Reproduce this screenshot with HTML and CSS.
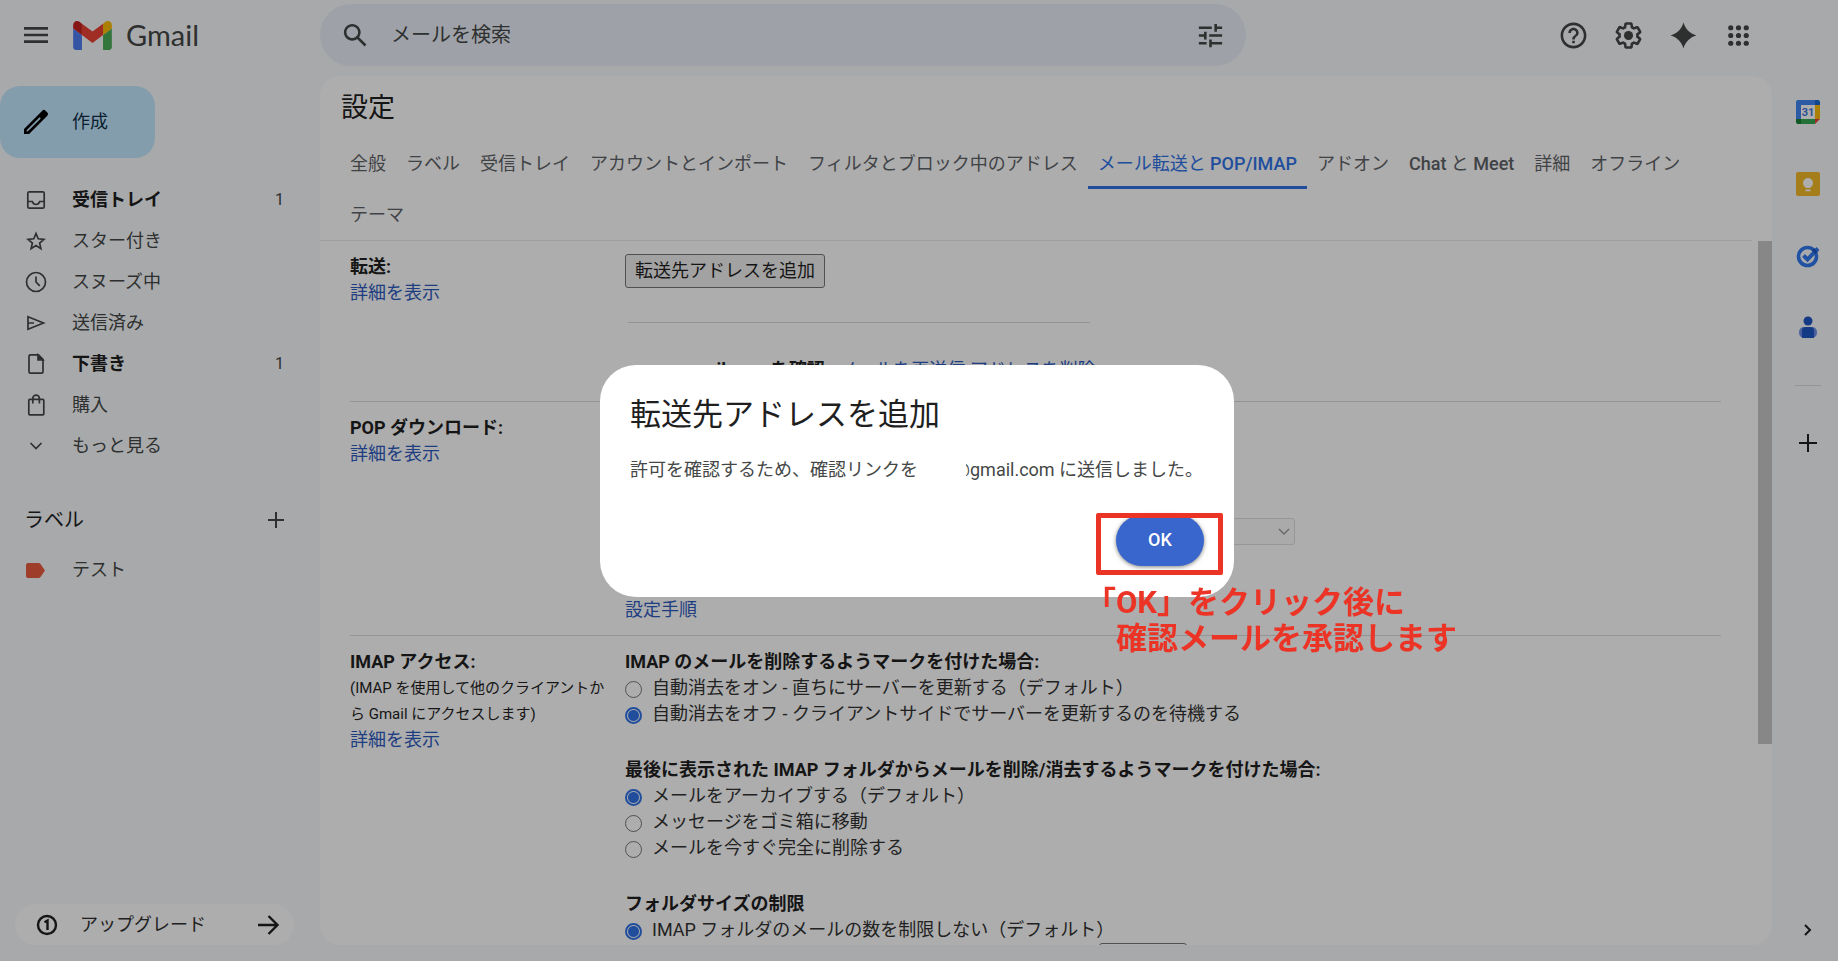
FILE: index.html
```
<!DOCTYPE html>
<html lang="ja">
<head>
    <meta charset="utf-8">
    <title>Gmail</title>
    <meta name="viewport" content="width=device-width, initial-scale=1">
    <link rel="stylesheet" href="styles.css">
</head>
<body>
    <div class="app">
        <header class="header">
            <div class="brand">
                <button class="icon-btn" aria-label="メインメニュー">
                    <svg class="icon-lg" viewBox="0 0 24 24"><path d="M3 18h18v-2H3v2zm0-5h18v-2H3v2zm0-7v2h18V6H3z"/></svg>
                </button>
                <a class="logo" href="#">
                    <svg class="logo-mark" viewBox="52 42 88 66">
                        <path fill="#4f7df0" d="M58 108h14V74L52 59v43c0 3.32 2.69 6 6 6"/>
                        <path fill="#4cae58" d="M120 108h14c3.32 0 6-2.69 6-6V59l-20 15"/>
                        <path fill="#fbbc04" d="M120 48v26l20-15v-8c0-7.42-8.47-11.65-14.4-7.2"/>
                        <path fill="#ea4335" d="M72 74V48l24 18 24-18v26L96 92"/>
                        <path fill="#c5221f" d="M52 51v8l20 15V48l-5.6-4.2c-5.94-4.45-14.4-.22-14.4 7.2"/>
                    </svg>
                    <span>Gmail</span>
                </a>
            </div>
            <form class="search">
                <button class="icon-btn" type="button" aria-label="検索">
                    <svg class="icon" viewBox="0 0 24 24"><path d="M20.49 19l-5.73-5.73C15.53 12.2 16 10.91 16 9.5 16 5.91 13.09 3 9.5 3S3 5.91 3 9.5 5.91 16 9.5 16c1.41 0 2.7-.47 3.77-1.24L19 20.49 20.49 19zM5 9.5C5 7.01 7.01 5 9.5 5S14 7.01 14 9.5 11.99 14 9.5 14 5 11.99 5 9.5z"/></svg>
                </button>
                <input class="search-input" type="text" placeholder="メールを検索" aria-label="メールを検索">
                <button class="icon-btn" type="button" aria-label="検索オプション">
                    <svg class="icon" viewBox="0 0 24 24"><path d="M3 17v2h6v-2H3zM3 5v2h10V5H3zm10 16v-2h8v-2h-8v-2h-2v6h2zM7 9v2H3v2h4v2h2V9H7zm14 4v-2H11v2h10zm-6-4h2V7h4V5h-4V3h-2v6z"/></svg>
                </button>
            </form>
            <div class="header-tools">
                <button class="icon-btn" aria-label="サポート">
                    <svg class="icon" viewBox="0 0 24 24"><path d="M11 18h2v-2h-2v2zm1-16C6.48 2 2 6.48 2 12s4.48 10 10 10 10-4.48 10-10S17.52 2 12 2zm0 18c-4.41 0-8-3.59-8-8s3.59-8 8-8 8 3.59 8 8-3.59 8-8 8zm0-14c-2.21 0-4 1.79-4 4h2c0-1.1.9-2 2-2s2 .9 2 2c0 2-3 1.75-3 5h2c0-2.25 3-2.5 3-5 0-2.21-1.79-4-4-4z"/></svg>
                </button>
                <button class="icon-btn" aria-label="設定">
                    <svg class="icon" viewBox="0 0 24 24"><path d="M13.85 22.25h-3.7c-.74 0-1.36-.54-1.45-1.27l-.27-1.89c-.27-.14-.53-.29-.79-.46l-1.8.72c-.7.26-1.47-.03-1.81-.65L2.2 15.53c-.35-.66-.2-1.44.36-1.88l1.53-1.19c-.01-.15-.02-.3-.02-.46 0-.15.01-.31.02-.46l-1.52-1.19c-.59-.45-.74-1.26-.37-1.88l1.85-3.19c.34-.62 1.11-.9 1.79-.63l1.81.73c.26-.17.52-.32.78-.46l.27-1.91c.09-.7.71-1.25 1.44-1.25h3.7c.74 0 1.36.54 1.45 1.27l.27 1.89c.27.14.53.29.79.46l1.8-.72c.71-.26 1.48.03 1.82.65l1.84 3.18c.36.66.2 1.44-.36 1.88l-1.52 1.19c.01.15.02.3.02.46s-.01.31-.02.46l1.52 1.19c.56.45.72 1.23.37 1.86l-1.86 3.22c-.34.62-1.11.9-1.8.63l-1.8-.72c-.26.17-.52.32-.78.46l-.27 1.91c-.1.68-.72 1.22-1.46 1.22zm-3.23-2h2.76l.37-2.55.53-.22c.44-.18.88-.44 1.34-.78l.45-.34 2.38.96 1.38-2.4-2.03-1.58.07-.56c.03-.26.06-.51.06-.78s-.03-.53-.06-.78l-.07-.56 2.03-1.58-1.39-2.4-2.39.96-.45-.35c-.42-.32-.87-.58-1.33-.77l-.52-.22-.37-2.55h-2.76l-.37 2.55-.53.21c-.44.19-.88.44-1.34.79l-.45.33-2.38-.95-1.39 2.39 2.03 1.58-.07.56a7 7 0 0 0-.06.79c0 .26.02.53.06.78l.07.56-2.03 1.58 1.38 2.4 2.39-.96.45.35c.43.33.86.58 1.33.77l.53.22.38 2.55z"/><circle cx="12" cy="12" r="3.5"/></svg>
                </button>
                <button class="icon-btn" aria-label="Gemini">
                    <svg class="icon" viewBox="0 0 24 24"><path d="M12 2c1.4 5 5 8.6 10 10-5 1.4-8.6 5-10 10-1.4-5-5-8.6-10-10 5-1.4 8.6-5 10-10z"/></svg>
                </button>
                <button class="icon-btn" aria-label="Google アプリ">
                    <svg class="icon" viewBox="0 0 24 24"><circle cx="6" cy="6" r="2"/><circle cx="12" cy="6" r="2"/><circle cx="18" cy="6" r="2"/><circle cx="6" cy="12" r="2"/><circle cx="12" cy="12" r="2"/><circle cx="18" cy="12" r="2"/><circle cx="6" cy="18" r="2"/><circle cx="12" cy="18" r="2"/><circle cx="18" cy="18" r="2"/></svg>
                </button>
            </div>
        </header>

        <div class="main">
            <aside class="sidebar">
                <button class="compose">
                    <svg class="icon-lg" viewBox="0 0 24 24"><path fill-rule="evenodd" d="M3 17.2V21h3.8L20.5 7.3a1.7 1.7 0 0 0 0-2.4l-1.4-1.4a1.7 1.7 0 0 0-2.4 0zM5.9 19H5v-.9l9.7-9.7.9.9z"/></svg>
                    <span>作成</span>
                </button>
                <nav class="folders">
                    <a class="folder unread" href="#">
                        <svg class="line-icon" viewBox="0 0 24 24"><rect x="3.8" y="3.8" width="16.4" height="16.4" rx="1.5"/><path d="M4 13.5h4.3c.6 1.9 1.9 3 3.7 3s3.1-1.1 3.700-3H20"/></svg>
                        <span class="folder-name">受信トレイ</span>
                        <span class="count">1</span>
                    </a>
                    <a class="folder" href="#">
                        <svg class="line-icon" viewBox="0 0 24 24"><path d="M12 4.500l2.200 5.300 5.700.5-4.300 3.700 1.300 5.600-4.900-3-4.900 3 1.300-5.600-4.300-3.700 5.700-.5z"/></svg>
                        <span class="folder-name">スター付き</span>
                    </a>
                    <a class="folder" href="#">
                        <svg class="line-icon" viewBox="0 0 24 24"><circle cx="12" cy="12" r="9.5"/><path d="M12 6.5V12l3.8 3.8"/></svg>
                        <span class="folder-name">スヌーズ中</span>
                    </a>
                    <a class="folder" href="#">
                        <svg class="line-icon" viewBox="0 0 24 24"><path d="M4 5.800L19.500 12 4 18.200zM4 12h6"/></svg>
                        <span class="folder-name">送信済み</span>
                    </a>
                    <a class="folder unread" href="#">
                        <svg class="line-icon" viewBox="0 0 24 24"><path d="M14.5 2.800H6.500a1.500 1.500 0 0 0-1.500 1.500v15.400a1.500 1.500 0 0 0 1.500 1.500h11a1.500 1.500 0 0 0 1.500-1.500V7.300z"/><path fill="#444746" d="M14 3v4.800h4.800z"/></svg>
                        <span class="folder-name">下書き</span>
                        <span class="count">1</span>
                    </a>
                    <a class="folder" href="#">
                        <svg class="line-icon" viewBox="0 0 24 24"><rect x="4.800" y="6.300" width="15" height="15.500" rx="1"/><path d="M8.800 10.500V5.500a3.300 3.300 0 0 1 6.600 0v5"/></svg>
                        <span class="folder-name">購入</span>
                    </a>
                    <a class="folder" href="#">
                        <svg class="line-icon" viewBox="0 0 24 24"><path d="M6.500 9l5.500 5.500L17.500 9"/></svg>
                        <span class="folder-name">もっと見る</span>
                    </a>
                </nav>
                <div class="labels-head">
                    <h2>ラベル</h2>
                    <button class="icon-btn" aria-label="新しいラベルを作成">
                        <svg class="plus-icon" viewBox="0 0 16 16"><path d="M8 0v16M0 8h16"/></svg>
                    </button>
                </div>
                <a class="folder" href="#">
                    <svg class="line-icon" viewBox="0 0 24 24"><path class="tag" d="M4 5h10.500c.8 0 1.500.3 2 1l4.500 6.500-4.500 6.500c-.5.700-1.200 1-2 1H4c-1 0-2-.8-2-2V7c0-1.200 1-2 2-2z"/></svg>
                    <span class="folder-name">テスト</span>
                </a>
                <button class="upgrade">
                    <svg class="badge-icon" viewBox="0 0 24 24"><circle cx="12" cy="12" r="9"/><path d="M9.500 9.300L12.500 7.500V17"/></svg>
                    <span class="upgrade-text">アップグレード</span>
                    <svg class="badge-icon" viewBox="0 0 24 24"><path d="M2 12h19M12.500 3l9 9-9 9"/></svg>
                </button>
            </aside>

            <main class="panel">
                <h1 class="panel-title">設定</h1>
                <nav class="tabs">
                    <a class="tab" href="#">全般</a>
                    <a class="tab" href="#">ラベル</a>
                    <a class="tab" href="#">受信トレイ</a>
                    <a class="tab" href="#">アカウントとインポート</a>
                    <a class="tab" href="#">フィルタとブロック中のアドレス</a>
                    <a class="tab active" href="#">メール転送と <b>POP/IMAP</b></a>
                    <a class="tab" href="#">アドオン</a>
                    <a class="tab" href="#"><b>Chat</b> と <b>Meet</b></a>
                    <a class="tab" href="#">詳細</a>
                    <a class="tab" href="#">オフライン</a>
                    <a class="tab" href="#">テーマ</a>
                </nav>
                <div class="panel-body">
                    <div class="settings">
                        <section class="row row-forward">
                            <div class="row-label">
                                <h3>転送:</h3>
                                <a href="#">詳細を表示</a>
                            </div>
                            <div class="row-content">
                                <button class="add-address">転送先アドレスを追加</button>
                                <hr>
                                <p class="pending"><b>gmail.com を確認</b> <a href="#">メールを再送信</a> <a href="#">アドレスを削除</a></p>
                            </div>
                        </section>
                        <section class="row row-pop">
                            <div class="row-label">
                                <h3>POP ダウンロード:</h3>
                                <a href="#">詳細を表示</a>
                            </div>
                            <div class="row-content">
                                <div class="select-wrap">
                                    <select class="pop-select" aria-label="POP ダウンロード" disabled><option></option></select>
                                    <svg class="select-arrow" viewBox="0 0 12 8"><path d="M1 1l5 5 5-5"/></svg>
                                </div>
                                <a href="#">設定手順</a>
                            </div>
                        </section>
                        <section class="row row-imap">
                            <div class="row-label">
                                <h3>IMAP アクセス:</h3>
                                <p class="note">(IMAP を使用して他のクライアントから Gmail にアクセスします)</p>
                                <a href="#">詳細を表示</a>
                            </div>
                            <div class="row-content">
                                <div class="group">
                                    <h3>IMAP のメールを削除するようマークを付けた場合:</h3>
                                    <label class="option"><input type="radio" name="expunge">自動消去をオン - 直ちにサーバーを更新する（デフォルト）</label>
                                    <label class="option"><input type="radio" name="expunge" checked>自動消去をオフ - クライアントサイドでサーバーを更新するのを待機する</label>
                                </div>
                                <div class="group">
                                    <h3>最後に表示された IMAP フォルダからメールを削除/消去するようマークを付けた場合:</h3>
                                    <label class="option"><input type="radio" name="deleted" checked>メールをアーカイブする（デフォルト）</label>
                                    <label class="option"><input type="radio" name="deleted">メッセージをゴミ箱に移動</label>
                                    <label class="option"><input type="radio" name="deleted">メールを今すぐ完全に削除する</label>
                                </div>
                                <div class="group">
                                    <h3>フォルダサイズの制限</h3>
                                    <label class="option"><input type="radio" name="limit" checked>IMAP フォルダのメールの数を制限しない（デフォルト）</label>
                                    <select class="limit-select" aria-label="フォルダサイズの制限"><option></option></select>
                                </div>
                            </div>
                        </section>
                    </div>
                    <div class="scrollbar"><div class="thumb"></div></div>
                </div>
            </main>

            <aside class="rail">
                <a href="#" aria-label="カレンダー">
                    <svg class="rail-icon" viewBox="0 0 24 24"><path fill="#4285f4" d="M2 0h17v5H5v14H0V2a2 2 0 0 1 2-2z"/><path fill="#1967d2" d="M19 0h3a2 2 0 0 1 2 2v3h-5z"/><path fill="#fbbc04" d="M19 5h5v14h-5z"/><path fill="#34a853" d="M5 19h14v5H5z"/><path fill="#188038" d="M0 19h5v5H2a2 2 0 0 1-2-2z"/><path fill="#ea4335" d="M19 19h5l-5 5z"/><path fill="#fff" d="M5 5h14v14H5z"/><text x="12" y="16" text-anchor="middle">31</text></svg>
                </a>
                <a href="#" aria-label="Keep">
                    <svg class="rail-icon" viewBox="0 0 24 24"><rect width="24" height="24" rx="2" fill="#f5b928"/><circle cx="12" cy="11" r="5" fill="#fff"/><path fill="#fff" d="M9.500 14h5v2h-5zM9.500 17.500h5v1.800h-5z"/></svg>
                </a>
                <a href="#" aria-label="ToDo リスト">
                    <svg class="rail-icon" viewBox="0 0 24 24"><circle cx="11.500" cy="12.500" r="9" fill="none" stroke="#3078f0" stroke-width="3.600"/><path d="M7.500 11.500l4 4L22 4.500" fill="none" stroke="#3078f0" stroke-width="4"/><path d="M17 5.500l3.500 3.500" stroke="#1b55c0" stroke-width="3"/></svg>
                </a>
                <a href="#" aria-label="連絡先">
                    <svg class="rail-icon" viewBox="0 0 24 24"><circle cx="12" cy="5" r="4.500" fill="#1f56c4"/><rect x="3" y="11" width="18" height="11" rx="5" fill="#6f8fe8"/><path fill="#1f56c4" d="M10 11h4a4 4 0 0 1 4 4v7H6v-7a4 4 0 0 1 4-4z"/></svg>
                </a>
                <div class="rail-line"></div>
                <button class="icon-btn" aria-label="アドオンを取得">
                    <svg class="rail-plus" viewBox="0 0 18 18"><path d="M9 0v18M0 9h18"/></svg>
                </button>
                <button class="icon-btn rail-toggle" aria-label="サイドパネルを非表示">
                    <svg class="rail-plus" viewBox="0 0 18 18"><path d="M6 4l5 5-5 5"/></svg>
                </button>
            </aside>
        </div>
    </div>

    <div class="overlay">
        <div class="dialog" role="dialog" aria-labelledby="dialogTitle">
            <h2 id="dialogTitle">転送先アドレスを追加</h2>
            <p class="message">許可を確認するため、確認リンクを<span class="masked">@</span>gmail.com に送信しました。</p>
            <button class="ok">OK</button>
            <div class="highlight"></div>
            <p class="callout">「OK」をクリック後に<br><span>確認メールを承認します</span></p>
        </div>
    </div>
</body>
</html>
```
FILE: styles.css
```
* {
    margin: 0;
    padding: 0;
    box-sizing: border-box;
}

body {
    background: #fff;
    color: #1f1f1f;
    font-family: Roboto, "Noto Sans CJK JP", sans-serif;
    font-size: 18px;
    line-height: 26px;
    overflow: hidden;
}

button,
input,
select {
    font: inherit;
    color: inherit;
}

button {
    border: none;
    background: none;
    cursor: pointer;
}

a {
    color: #2f5cc0;
    text-decoration: none;
}

h3 {
    font-size: 18px;
    font-weight: 700;
}

svg {
    display: block;
    flex: none;
}

.app {
    height: calc(100vh - 3px);
    background: #f8fafd;
    display: flex;
    flex-direction: column;
}

.icon-btn {
    display: flex;
}

.icon {
    width: 31px;
    height: 31px;
    fill: #444746;
}

.icon-lg {
    width: 32px;
    height: 32px;
    fill: #444746;
}

/* header */

.header {
    height: 76px;
    padding: 4px 84px 10px 0;
    display: flex;
    align-items: center;
}

.brand {
    width: 320px;
    padding-left: 20px;
    display: flex;
    align-items: center;
    gap: 21px;
}

.logo {
    display: flex;
    align-items: center;
    gap: 14px;
    color: #444746;
    font-family: Lato, sans-serif;
    font-size: 29px;
}

.logo-mark {
    width: 39px;
    height: 29px;
}

.search {
    flex: 0 1 926px;
    height: 62px;
    padding: 0 20px;
    border-radius: 31px;
    background: #e9eef6;
    display: flex;
    align-items: center;
    gap: 20px;
}

.search-input {
    flex: 1;
    min-width: 0;
    border: none;
    outline: none;
    background: none;
    font-size: 20px;
}

.search-input::placeholder {
    color: #444746;
    opacity: 1;
}

.header-tools {
    margin-left: auto;
    display: flex;
    gap: 24px;
}

/* sidebar */

.main {
    flex: 1;
    min-height: 0;
    padding-bottom: 16px;
    display: flex;
}

.sidebar {
    width: 320px;
    padding-top: 10px;
    display: flex;
    flex-direction: column;
}

.compose {
    width: 155px;
    height: 72px;
    margin-bottom: 21px;
    padding-left: 20px;
    border-radius: 20px;
    background: #c2e7ff;
    color: #103048;
    display: flex;
    align-items: center;
    gap: 20px;
}

.compose .icon-lg {
    fill: #000;
}

.folder {
    height: 41px;
    padding: 0 36px 0 24px;
    color: #444746;
    display: flex;
    align-items: center;
    gap: 24px;
}

.folder-name {
    flex: 1;
}

.unread .folder-name {
    color: #1f1f1f;
    font-weight: 700;
}

.count {
    font-size: 16px;
}

.line-icon {
    width: 24px;
    height: 24px;
    fill: none;
    stroke: #444746;
    stroke-width: 1.7;
}

.line-icon .tag {
    fill: #eb5b40;
    stroke: none;
}

.labels-head {
    height: 50px;
    margin: 29px 36px 4px 24px;
    display: flex;
    align-items: center;
    justify-content: space-between;
}

.labels-head h2 {
    font-size: 20px;
    font-weight: 400;
}

.plus-icon {
    width: 16px;
    height: 16px;
    stroke: #444746;
    stroke-width: 2;
}

.upgrade {
    height: 41px;
    margin: auto 26px 0 15px;
    padding: 0 14px 0 20px;
    border-radius: 21px;
    background: #fff;
    color: #303030;
    display: flex;
    align-items: center;
    gap: 21px;
}

.upgrade-text {
    flex: 1;
    text-align: left;
}

.badge-icon {
    width: 24px;
    height: 24px;
    fill: none;
    stroke: #1f1f1f;
    stroke-width: 2.4;
}

/* settings panel */

.panel {
    flex: 1;
    min-width: 0;
    border-radius: 20px;
    background: #fff;
    display: flex;
    flex-direction: column;
    overflow: hidden;
}

.panel-title {
    height: 62px;
    padding-left: 21px;
    font-size: 27px;
    font-weight: 400;
    line-height: 64px;
}

.tabs {
    margin-right: 20px;
    padding-left: 20px;
    border-bottom: 1px solid #e6e8eb;
    display: flex;
    flex-wrap: wrap;
}

.tab {
    height: 51px;
    padding: 0 10px;
    border-bottom: 3px solid transparent;
    color: #5f6368;
    line-height: 52px;
}

.tab b {
    font-weight: 500;
}

.tab.active {
    color: #3074e8;
    border-bottom-color: #3074e8;
}

.panel-body {
    flex: 1;
    min-height: 0;
    display: flex;
}

.settings {
    flex: 1;
    padding: 0 37px 0 30px;
    overflow: hidden;
}

.row {
    display: flex;
    padding-top: 13px;
    border-bottom: 1px solid #d8dadd;
}

.row-forward {
    height: 161px;
}

.row-pop {
    padding-bottom: 12px;
}

.row-label {
    width: 275px;
    padding-right: 10px;
    flex: none;
}

.row-content {
    flex: 1;
}

.note {
    font-size: 15px;
}

.add-address {
    height: 34px;
    padding: 0 9px;
    border: 1px solid #767676;
    border-radius: 3px;
    background: #efefef;
    display: block;
}

.row-content hr {
    width: 462px;
    margin: 34px 0 34px 3px;
    border: none;
    border-top: 1px solid #d8dadd;
}

.pending {
    padding-left: 56px;
}

.pending a:first-of-type {
    margin-left: 10px;
}

.select-wrap {
    width: 394px;
    margin: 103px 0 52px 276px;
    position: relative;
}

.pop-select {
    width: 100%;
    height: 27px;
    border: 1px solid #d0d0d0;
    border-radius: 3px;
    background: #fafafa;
    appearance: none;
    display: block;
}

.select-arrow {
    width: 12px;
    height: 8px;
    position: absolute;
    right: 5px;
    top: 10px;
    fill: none;
    stroke: #999;
    stroke-width: 1.4;
}

.group {
    margin-bottom: 30px;
}

.option {
    display: flex;
    align-items: center;
    gap: 10px;
    color: #333;
}

.option input {
    width: 17px;
    height: 17px;
    margin-top: 3px;
    border: 1px solid #767676;
    border-radius: 50%;
    appearance: none;
}

.option input:checked {
    border: 2px solid #3074e8;
    background: radial-gradient(#3074e8 0 5px, transparent 6px);
}

.limit-select {
    width: 88px;
    height: 27px;
    margin-left: 474px;
    border: 1px solid #767676;
    border-radius: 3px;
    background: #fff;
    appearance: none;
    display: block;
}

.scrollbar {
    width: 14px;
}

.thumb {
    height: 503px;
    background: #c8c8c8;
}

/* right rail */

.rail {
    width: 66px;
    padding: 24px 0 6px 6px;
    display: flex;
    flex-direction: column;
    align-items: center;
    gap: 48px;
}

.rail-icon {
    width: 24px;
    height: 24px;
}

.rail-icon text {
    fill: #3f78e0;
    font-size: 11px;
    font-weight: 700;
}

.rail-line {
    width: 26px;
    height: 1px;
    margin-top: -3px;
    background: #d8dadd;
}

.rail-plus {
    width: 18px;
    height: 18px;
    fill: none;
    stroke: #1f1f1f;
    stroke-width: 2;
}

.rail-toggle {
    margin-top: auto;
}

/* dialog */

.overlay {
    position: fixed;
    inset: 0 0 3px;
    padding-right: 4px;
    background: rgba(0, 0, 0, 0.32);
    display: flex;
    align-items: center;
    justify-content: center;
}

.dialog {
    width: 634px;
    padding: 28px 30px 31px;
    border-radius: 36px;
    background: #fff;
    display: flex;
    flex-direction: column;
    position: relative;
}

.dialog h2 {
    margin-bottom: 20px;
    font-size: 31px;
    font-weight: 400;
    line-height: 44px;
}

.message {
    margin-bottom: 32px;
    color: #444746;
}

/* the account name is blanked out up to the edge of the @ sign */
.masked {
    width: 52px;
    display: inline-block;
    position: relative;
    text-align: right;
}

.masked::before {
    content: "";
    position: absolute;
    inset: 0 4px 0 0;
    background: #fff;
}

.ok {
    width: 88px;
    height: 51px;
    align-self: flex-end;
    border-radius: 26px;
    background: #3866cc;
    color: #fff;
    font-weight: 500;
    box-shadow: 0 1px 4px rgba(0, 0, 0, 0.5);
}

.highlight {
    width: 127px;
    height: 62px;
    position: absolute;
    right: 11px;
    bottom: 22px;
    border: 5px solid #ec3426;
    border-radius: 2px;
}

.callout {
    position: absolute;
    left: 485px;
    top: 220px;
    color: #ec3426;
    font-size: 31px;
    font-weight: 700;
    line-height: 36px;
    white-space: nowrap;
}

.callout span {
    padding-left: 31px;
}
```
